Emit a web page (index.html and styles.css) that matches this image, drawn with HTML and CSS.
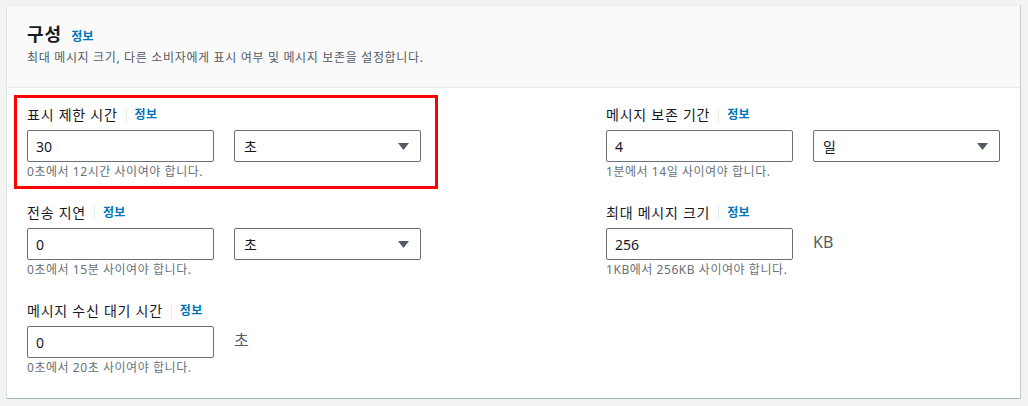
FILE: index.html
```html
<!DOCTYPE html>
<html lang="ko">
<head>
<meta charset="utf-8">
<title>구성</title>
<link rel="stylesheet" href="styles.css">
</head>
<body>
<div class="card">
  <div class="card-header">
    <div class="title-row">
      <h2 class="title">구성</h2>
      <a class="info info-plain" href="#">정보</a>
    </div>
    <p class="desc">최대 메시지 크기, 다른 소비자에게 표시 여부 및 메시지 보존을 설정합니다.</p>
  </div>
  <div class="card-body">
    <div class="field highlighted">
      <div class="label-row"><span class="label">표시 제한 시간</span><a class="info" href="#">정보</a></div>
      <div class="controls">
        <input class="input" type="text" value="30">
        <div class="select"><span>초</span><svg width="11" height="7" viewBox="0 0 11 7"><polygon points="0,0 11,0 5.5,7" fill="#545b64"/></svg></div>
      </div>
      <div class="hint">0초에서 12시간 사이여야 합니다.</div>
    </div>
    <div class="field">
      <div class="label-row"><span class="label">메시지 보존 기간</span><a class="info" href="#">정보</a></div>
      <div class="controls">
        <input class="input" type="text" value="4">
        <div class="select"><span>일</span><svg width="11" height="7" viewBox="0 0 11 7"><polygon points="0,0 11,0 5.5,7" fill="#545b64"/></svg></div>
      </div>
      <div class="hint">1분에서 14일 사이여야 합니다.</div>
    </div>
    <div class="field">
      <div class="label-row"><span class="label">전송 지연</span><a class="info" href="#">정보</a></div>
      <div class="controls">
        <input class="input" type="text" value="0">
        <div class="select"><span>초</span><svg width="11" height="7" viewBox="0 0 11 7"><polygon points="0,0 11,0 5.5,7" fill="#545b64"/></svg></div>
      </div>
      <div class="hint">0초에서 15분 사이여야 합니다.</div>
    </div>
    <div class="field">
      <div class="label-row"><span class="label">최대 메시지 크기</span><a class="info" href="#">정보</a></div>
      <div class="controls">
        <input class="input" type="text" value="256">
        <span class="unit">KB</span>
      </div>
      <div class="hint">1KB에서 256KB 사이여야 합니다.</div>
    </div>
    <div class="field">
      <div class="label-row"><span class="label">메시지 수신 대기 시간</span><a class="info" href="#">정보</a></div>
      <div class="controls">
        <input class="input" type="text" value="0">
        <span class="unit">초</span>
      </div>
      <div class="hint">0초에서 20초 사이여야 합니다.</div>
    </div>
  </div>
</div>
</body>
</html>
```
FILE: styles.css
```css
* { box-sizing: border-box; }
html, body { margin: 0; }
body {
  padding: 5px 7px 7px 6px;
  background: #f2f3f3;
  font-family: "Noto Sans", "Noto Sans CJK KR", sans-serif;
  color: #16191f;
}
.card {
  background: #fff;
  border-top: 1px solid #eaeded;
  border-left: 1px solid #e1e4e4;
  border-right: 1px solid #c6cbcc;
  border-bottom: 1px solid #aab7b8;
}
.card-header {
  background: #fafafa;
  border-bottom: 1px solid #eaeded;
  padding: 17px 20px 21px 20px;
}
.title-row {
  display: flex;
  align-items: baseline;
  height: 22px;
}
.title {
  margin: 0;
  font-size: 18px;
  line-height: 22px;
  font-weight: 700;
  letter-spacing: 1px;
  color: #16191f;
}
.desc {
  margin: 5px 0 0 0;
  font-size: 12px;
  line-height: 16px;
  letter-spacing: 0.66px;
  color: #545b64;
}
.info {
  font-size: 12px;
  line-height: 16px;
  font-weight: 700;
  letter-spacing: 0.3px;
  color: #0073bb;
  text-decoration: none;
  border-left: 1px solid #eaeded;
  margin-left: 8px;
  padding-left: 8px;
}
.info-plain {
  border-left: none;
  margin-left: 9px;
  padding-left: 0;
}
.card-body {
  padding: 16px 20px 22px 20px;
  display: grid;
  grid-template-columns: 579px 1fr;
  row-gap: 22px;
}
.field {
  position: relative;
  width: 394px;
}
.highlighted::after {
  content: "";
  position: absolute;
  left: -13px;
  top: -9px;
  right: -17px;
  bottom: -9px;
  border: 3px solid #ff0000;
  pointer-events: none;
}
.label-row {
  display: flex;
  align-items: center;
  height: 22px;
  margin-bottom: 4px;
}
.label {
  font-size: 14px;
  line-height: 22px;
  letter-spacing: 0.75px;
  color: #16191f;
}
.controls {
  display: grid;
  grid-template-columns: 187px 187px;
  column-gap: 20px;
  height: 32px;
}
.input {
  height: 32px;
  width: 187px;
  margin: 0;
  border: 1px solid #687078;
  border-radius: 2px;
  padding: 0 8px;
  font-family: inherit;
  font-size: 14px;
  color: #16191f;
  background: #fff;
  outline: none;
}
.select {
  height: 32px;
  border: 1px solid #687078;
  border-radius: 2px;
  padding: 0 11px 0 9px;
  display: flex;
  align-items: center;
  justify-content: space-between;
  font-size: 14px;
  color: #16191f;
}
.select svg { display: block; }
.unit {
  font-size: 16px;
  line-height: 22px;
  padding-top: 3px;
  color: #545b64;
}
.hint {
  margin-top: 2px;
  font-size: 12px;
  line-height: 16px;
  letter-spacing: 0.55px;
  color: #687078;
}
```
